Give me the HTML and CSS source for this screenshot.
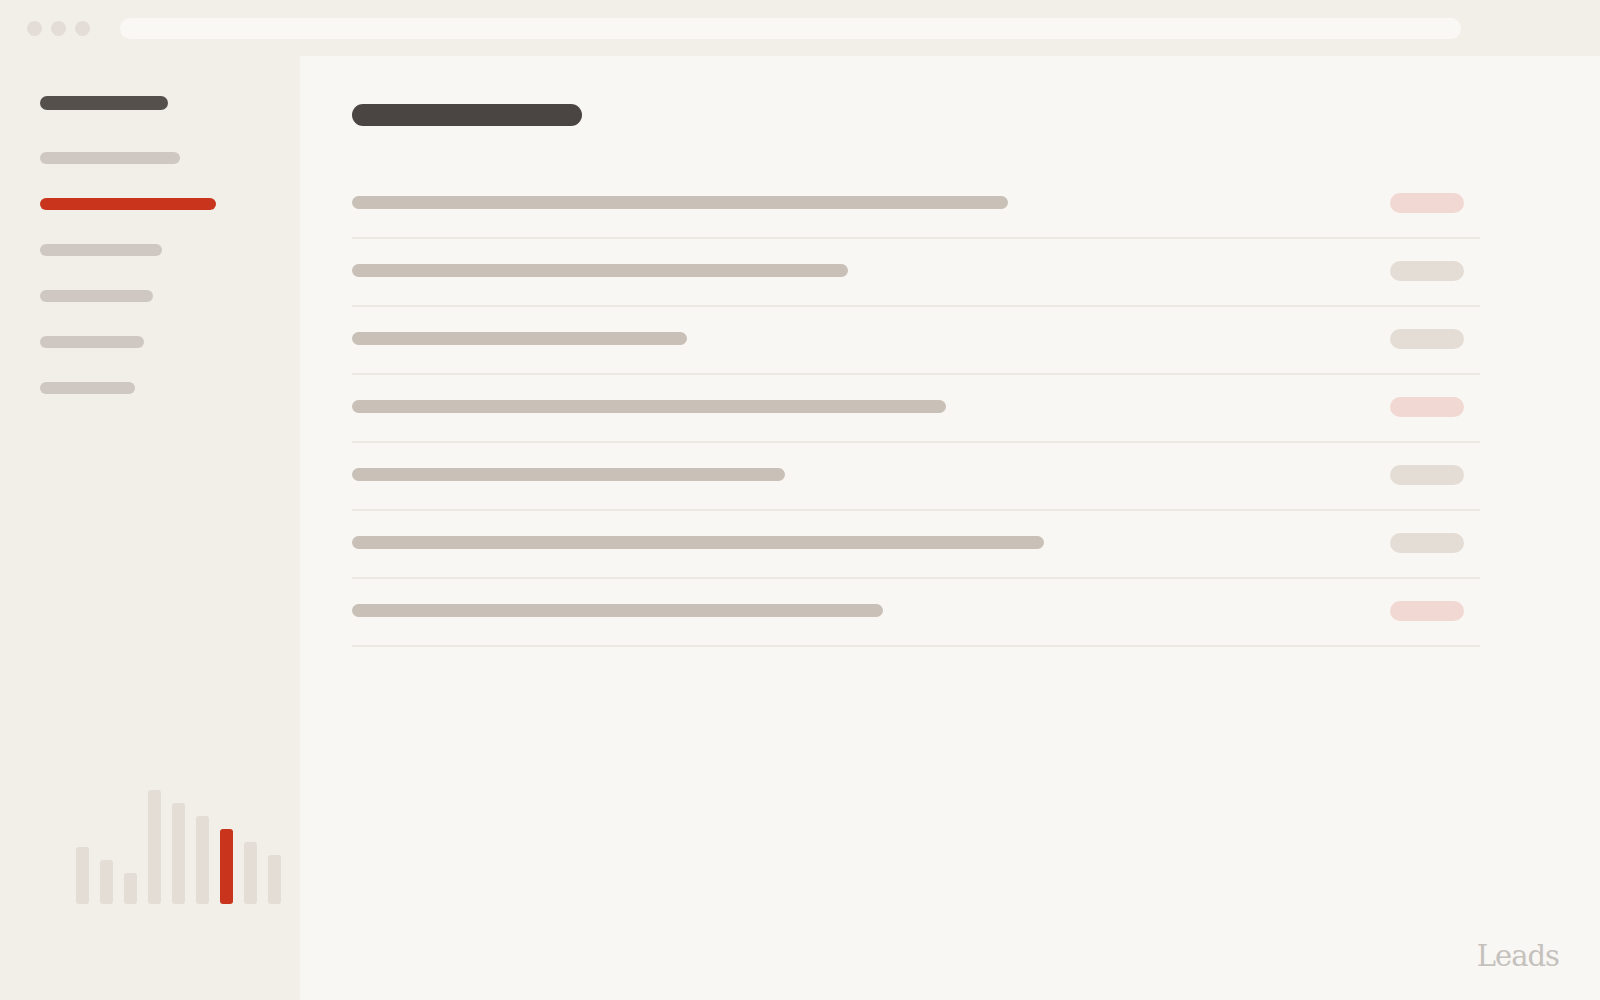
FILE: index.html
```html
<!DOCTYPE html>
<html lang="en">
<head>
<meta charset="utf-8">
<title>Leads</title>
<link rel="stylesheet" href="styles.css">
</head>
<body>
<div class="window">
  <header class="topbar">
    <div class="dots">
      <span class="dot"></span><span class="dot"></span><span class="dot"></span>
    </div>
    <div class="address"></div>
  </header>
  <div class="layout">
    <aside class="sidebar">
      <div class="side-title"></div>
      <nav class="nav">
        <span class="nav-item w1"></span>
        <span class="nav-item active w2"></span>
        <span class="nav-item w3"></span>
        <span class="nav-item w4"></span>
        <span class="nav-item w5"></span>
        <span class="nav-item w6"></span>
      </nav>
      <div class="chart">
        <span class="bar" style="height:57px"></span>
        <span class="bar" style="height:44px"></span>
        <span class="bar" style="height:31px"></span>
        <span class="bar" style="height:114px"></span>
        <span class="bar" style="height:101px"></span>
        <span class="bar" style="height:88px"></span>
        <span class="bar hot" style="height:75px"></span>
        <span class="bar" style="height:62px"></span>
        <span class="bar" style="height:49px"></span>
      </div>
    </aside>
    <main class="main">
      <div class="page-title"></div>
      <ul class="rows">
        <li class="row"><span class="line" style="width:656px"></span><span class="pill pink"></span></li>
        <li class="row"><span class="line" style="width:496px"></span><span class="pill"></span></li>
        <li class="row"><span class="line" style="width:335px"></span><span class="pill"></span></li>
        <li class="row"><span class="line" style="width:594px"></span><span class="pill pink"></span></li>
        <li class="row"><span class="line" style="width:433px"></span><span class="pill"></span></li>
        <li class="row"><span class="line" style="width:692px"></span><span class="pill"></span></li>
        <li class="row"><span class="line" style="width:531px"></span><span class="pill pink"></span></li>
      </ul>
      <div class="label">Leads</div>
    </main>
  </div>
</div>
</body>
</html>
```

FILE: styles.css
```css
html, body {
  margin: 0;
  padding: 0;
  width: 1600px;
  height: 1000px;
  overflow: hidden;
  background: #f2efe9;
  font-family: "DejaVu Serif", "Liberation Serif", serif;
}

.window {
  display: flex;
  flex-direction: column;
  width: 1600px;
  height: 1000px;
}

.topbar {
  height: 56px;
  flex: none;
  display: flex;
  align-items: center;
  padding-left: 27px;
  box-sizing: border-box;
  background: #f2efe9;
}

.dots {
  display: flex;
  gap: 9px;
}

.dot {
  width: 15px;
  height: 15px;
  border-radius: 50%;
  background: #e4ddd7;
}

.address {
  margin-left: 30px;
  width: 1341px;
  height: 21px;
  border-radius: 11px;
  background: #faf8f5;
}

.layout {
  flex: 1;
  display: flex;
  min-height: 0;
}

.sidebar {
  width: 300px;
  flex: none;
  display: flex;
  flex-direction: column;
  padding: 40px 0 96px 40px;
  box-sizing: border-box;
  background: #f2efe9;
}

.side-title {
  width: 128px;
  height: 14px;
  border-radius: 7px;
  background: #55504c;
}

.nav {
  display: flex;
  flex-direction: column;
  gap: 34px;
  margin-top: 42px;
}

.nav-item {
  display: block;
  height: 12px;
  border-radius: 6px;
  background: #cec7c2;
}

.nav-item.active { background: #c8341c; }
.w1 { width: 140px; }
.w2 { width: 176px; }
.w3 { width: 122px; }
.w4 { width: 113px; }
.w5 { width: 104px; }
.w6 { width: 95px; }

.chart {
  margin-top: auto;
  margin-left: 36px;
  display: flex;
  align-items: flex-end;
  gap: 11px;
}

.bar {
  display: block;
  width: 13px;
  border-radius: 3px;
  background: #e3ddd6;
}

.bar.hot { background: #c8341c; }

.main {
  flex: 1;
  display: flex;
  flex-direction: column;
  padding: 48px 120px 0 52px;
  box-sizing: border-box;
  background: #f9f7f3;
}

.page-title {
  width: 230px;
  height: 22px;
  border-radius: 11px;
  background: #4a4542;
}

.rows {
  list-style: none;
  margin: 45px 0 0;
  padding: 0;
}

.row {
  height: 63px;
  padding-bottom: 3px;
  display: flex;
  align-items: center;
  justify-content: space-between;
  border-bottom: 2px solid #ebe7e1;
}

.line {
  display: block;
  height: 13px;
  border-radius: 7px;
  background: #c9c0b7;
}

.pill {
  display: block;
  width: 74px;
  height: 20px;
  margin-right: 16px;
  border-radius: 10px;
  background: #e4ddd5;
}

.pill.pink { background: #f2d8d3; }

.label {
  margin-top: auto;
  align-self: flex-end;
  margin-right: -79px;
  margin-bottom: 29px;
  font-size: 29px;
  letter-spacing: -1px;
  line-height: 1;
  color: #c5c1bd;
}
```
